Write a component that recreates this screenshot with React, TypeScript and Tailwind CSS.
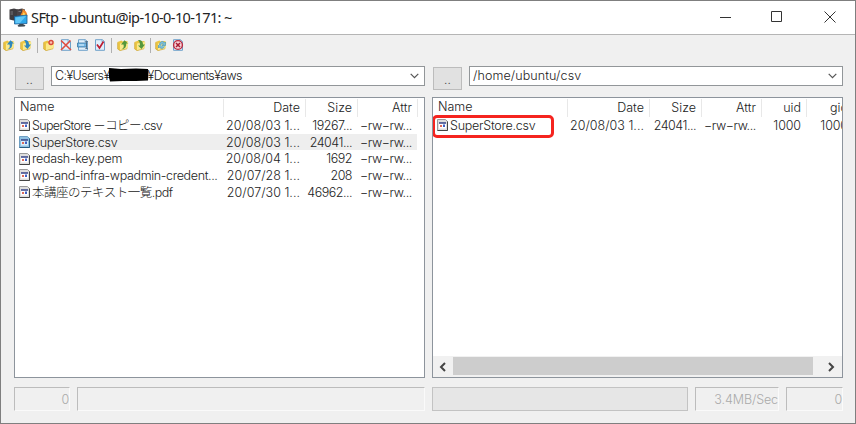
import {ReactNode} from "react"
import clsx from "clsx"

type FileRow = {
  name: string
  cells: string[]
  selected?: boolean
  tracking: string
}

type Column = {
  label: string
  width: string
  tracking: string
}

const localColumns: Column[] = [
  {label: "Date", width: "w-[82px]", tracking: "tracking-[0.020px]"},
  {label: "Size", width: "w-[52px]", tracking: "tracking-[-0.500px]"},
  {label: "Attr", width: "w-[60px]", tracking: "tracking-[-0.400px]"},
]

const remoteColumns: Column[] = [
  ...localColumns,
  {label: "uid", width: "w-[45px]", tracking: "tracking-[-0.100px]"},
  {label: "gid", width: "w-[47px]", tracking: "tracking-[-0.100px]"},
]

const localFiles: FileRow[] = [
  {
    name: "SuperStore －コピー.csv",
    cells: ["20/08/03 1...", "19267...", "−rw−rw..."],
    tracking: "tracking-[-0.650px]",
  },
  {
    name: "SuperStore.csv",
    cells: ["20/08/03 1...", "24041...", "−rw−rw..."],
    selected: true,
    tracking: "tracking-[-0.250px]",
  },
  {
    name: "redash-key.pem",
    cells: ["20/08/04 1...", "1692", "−rw−rw..."],
    tracking: "tracking-[-0.300px]",
  },
  {
    name: "wp-and-infra-wpadmin-credent...",
    cells: ["20/07/28 1...", "208", "−rw−rw..."],
    tracking: "tracking-[-0.350px]",
  },
  {
    name: "本講座のテキスト一覧.pdf",
    cells: ["20/07/30 1...", "46962...", "−rw−rw..."],
    tracking: "tracking-[-0.500px]",
  },
]

const remoteFiles: FileRow[] = [
  {
    name: "SuperStore.csv",
    cells: ["20/08/03 1...", "24041...", "−rw−rw...", "1000", "1000"],
    tracking: "tracking-[-0.250px]",
  },
]

const AppIcon = () => (
  <svg width="20" height="20" viewBox="0 0 20 20" className="shrink-0">
    <path d="M.5 1.500L5 .5l4 1V12l-4.500.5-4-1z" fill="#3e3c3f" />
    <path d="M8 1.500l5-1 3 1v9H8z" fill="#4a4346" />
    <path d="M1.500 4h2.500M1.500 6h2.500M9.500 3.500H12" stroke="#77777c" />
    <path d="M11.500 8.500c0-3 2.500-4 2-7.500 4 2 5.500 5 4.500 8z" fill="#f28a2c" />
    <path d="M13 8.500c0-2 1.500-2.500 1.500-4.500 1.500 1.500 2.500 3 1.500 4.500z" fill="#ffdc5c" />
    <path d="M5.500 8.500l12.500-1.500v8.500L5.500 16z" fill="#2fa8ea" stroke="#1c5d94" strokeWidth=".8" />
    <path d="M6.500 9.500L17 8l-6 7-4.500.3z" fill="#62c8f8" />
    <path d="M10.500 16h3.500l2.500 1.500-1 1-6 .3-1-1z" fill="#3d4a55" />
  </svg>
)

const Folder = ({children}: {children: ReactNode}) => (
  <svg width="12" height="12" viewBox="0 0 12 12" className="shrink-0">
    <path d="M.5 3L4.500 1.500l1 1 5-.5v7.500L3 11.800.5 10z" fill="#ecc644" />
    <path d="M3 4.500l7-1.500 1.500.8L10 9.800 3 11.500z" fill="#fbe98c" />
    <path d="M.7 3.500V10L3 11.600l7-1.800" fill="none" stroke="#c8a13a" strokeWidth=".6" />
    {children}
  </svg>
)

const Sheet = ({children}: {children: ReactNode}) => (
  <svg width="12" height="12" viewBox="0 0 12 12" className="shrink-0">
    <path d="M1.500.7h7l2 2v8.600h-9z" fill="#e1effa" stroke="#6fa2ca" />
    <path d="M8 .7v2.500h2.500" fill="none" stroke="#6fa2ca" strokeWidth=".7" />
    {children}
  </svg>
)

const Separator = () => <div className="h-[15px] w-px bg-[#b0b0b0]" />

const Toolbar = () => (
  <div className="flex h-[22px] items-center pb-[2px] pl-[2px]">
    <div className="flex w-[34px] gap-[5px]">
      <Folder>
        <path d="M4.500 10.500c2.500-1.500 2.500-3 2-5H4L7.500 1.300 11 4.500H9.300c.2 3.500-1.500 5.500-4.800 6z" fill="#2e87bd" />
      </Folder>
      <Folder>
        <path d="M4 1c4 0 5 2 5 4.500h2L7.500 10 4 6.500h2C6 4 5.500 2.500 4 1z" fill="#2e87bd" />
      </Folder>
    </div>
    <Separator />
    <div className="flex w-[73px] gap-[5px] pl-[5px]">
      <Folder>
        <circle cx="8" cy="3.500" r="2" fill="#fbc1b3" stroke="#d6473d" strokeWidth="1.400" />
      </Folder>
      <Sheet>
        <path d="M1 1.500l10 9.500M10.500 1.500L1 11" stroke="#df4c40" strokeWidth="1.600" />
      </Sheet>
      <Sheet>
        <path d="M.5 4h9v4h-9z" fill="#73b7e5" stroke="#3a77a3" strokeWidth=".8" />
        <path d="M2 6h5" stroke="#e8f6ff" />
        <path d="M9.500 2.500v7M8.300 2.500h2.500M8.300 9.500h2.500" stroke="#47657e" strokeWidth=".8" />
      </Sheet>
      <Sheet>
        <path d="M3 5.500l2.500 3.500 4-6.500" fill="none" stroke="#bd1d32" strokeWidth="1.700" />
      </Sheet>
    </div>
    <Separator />
    <div className="flex w-[38px] gap-[5px] pl-[5px]">
      <Folder>
        <path d="M4.500 10.500c2.500-1.500 2.500-3 2-5H4L7.500 1.300 11 4.500H9.300c.2 3.500-1.500 5.500-4.800 6z" fill="#55973b" />
      </Folder>
      <Folder>
        <path d="M4 1c4 0 5 2 5 4.500h2L7.500 10 4 6.500h2C6 4 5.500 2.500 4 1z" fill="#55973b" />
      </Folder>
    </div>
    <Separator />
    <div className="flex gap-[5px] pl-[4px]">
      <Folder>
        <path d="M4.500 6c0-4 4-4.500 5-2l1-1v3.500H7L8.300 5C7 4 6 5 5.500 6.500M9.500 7.500c-1 2.500-4 2.500-5 .5l-1 1V6" fill="#79bddb" stroke="#4b96b9" strokeWidth=".7" />
      </Folder>
      <Sheet>
        <circle cx="6" cy="6" r="4.400" fill="#f6d5db" stroke="#bd2a40" strokeWidth="1.400" />
        <path d="M4 4l4 4M8 4L4 8" stroke="#a91c33" strokeWidth="1.500" />
      </Sheet>
    </div>
  </div>
)

const FileIcon = ({selected}: {selected?: boolean}) => (
  <svg width="11" height="12" viewBox="0 0 11 12" className="shrink-0">
    <path d="M.5.5h8l2 2v9H.5z" fill={selected ? "#8fc0e2" : "#dedede"} stroke={selected ? "#6f9fc2" : "#9a9a9a"} />
    <path d="M10.500 2.500v9H.5" fill="none" stroke={selected ? "#265c83" : "#444"} />
    <path d="M2 4h7v5.500H2z" fill={selected ? "#d9effc" : "#fff"} />
    <path d="M2 4h7" stroke="#27357f" strokeWidth="1.400" />
    <path d="M3 6h2v2H3z" fill="#dd6a5c" />
    <path d="M6 5.500h2v2.500H6z" fill="#3f62c4" />
  </svg>
)

const PathBar = ({children}: {children: ReactNode}) => (
  <div className="flex h-[31px] items-start justify-between">
    <button className="mt-px ml-px h-[23px] w-[29px] border border-[#bcbcbc] bg-[#e1e1e1] pt-[3px] text-[12px] leading-[16px] text-[#555]">
      ..
    </button>
    <div className="flex h-5 w-[374px] items-center justify-between border border-[#929699] bg-white pr-[5px] pl-[3px]">
      <div className="flex items-center whitespace-pre">{children}</div>
      <svg width="9" height="6" viewBox="0 0 9 6">
        <path d="M.7.8l3.800 3.800L8.300.8" fill="none" stroke="#555" strokeWidth="1.200" />
      </svg>
    </div>
  </div>
)

interface PanelProps {
  columns: Column[]
  files: FileRow[]
  nameWidth: string
  highlightFirst?: boolean
  children?: ReactNode
}

const FilePanel = ({columns, files, nameWidth, highlightFirst, children}: PanelProps) => (
  <div className="flex h-[281px] w-[411px] flex-col overflow-hidden border border-[#8d949c] bg-white">
    <div className="flex h-[19px] shrink-0 items-center">
      <div className={clsx("shrink-0 pl-[5px]", nameWidth)}>Name</div>
      {columns.map(column => (
        <div
          key={column.label}
          className={clsx("h-[18px] shrink-0 border-l border-[#e8e8e8] pr-[5px] text-right leading-[18px]", column.width)}
        >
          {column.label}
        </div>
      ))}
      <div className="h-[18px] w-px shrink-0 bg-[#e8e8e8]" />
    </div>
    {files.map((file, i) => (
      <div key={file.name} className="relative flex h-[16.700px] shrink-0 items-center">
        {highlightFirst && i === 0 && (
          <div className="absolute top-[-2px] left-[-1px] h-[23px] w-[122px] rounded-[5px] border-3 border-[#f5241f]" />
        )}
        <div className={clsx("flex h-full shrink-0 items-center pl-[4px]", nameWidth)}>
          <FileIcon selected={file.selected} />
          <div
            className={clsx(
              "h-full grow pl-[2px] leading-[18px] whitespace-nowrap",
              file.selected && "bg-[#eeeeee]",
              file.tracking
            )}
          >
            {file.name}
          </div>
        </div>
        {file.cells.map((cell, j) => (
          <div
            key={j}
            className={clsx(
              "h-full shrink-0 pr-[5px] text-right leading-[18px] whitespace-nowrap",
              columns[j].width,
              columns[j].tracking,
              file.selected && "bg-[#eeeeee]"
            )}
          >
            {cell}
          </div>
        ))}
      </div>
    ))}
    {children}
  </div>
)

const Scrollbar = () => (
  <div className="mt-auto flex h-[21px] shrink-0 items-center justify-between bg-[#f1f1f1] px-[6px]">
    <svg width="8" height="10" viewBox="0 0 8 10">
      <path d="M6 1L2 5l4 4" fill="none" stroke="#444" strokeWidth="2" />
    </svg>
    <div className="mb-px h-[18px] w-[360px] bg-[#cdcdcd]" />
    <svg width="8" height="10" viewBox="0 0 8 10" className="mr-px ml-[8px]">
      <path d="M2 1l4 4-4 4" fill="none" stroke="#444" strokeWidth="2" />
    </svg>
  </div>
)

const StatusBox = ({width, children}: {width: string; children?: ReactNode}) => (
  <div
    className={clsx(
      "h-6 border border-t-[#bcbcbc] border-r-[#fafafa] border-b-[#fafafa] border-l-[#bcbcbc] text-right leading-[24px] tracking-[-0.100px] whitespace-nowrap text-[#aaa]",
      width
    )}
  >
    {children}
  </div>
)

export default function App() {
  return (
    <div className="flex h-[424px] w-[856px] flex-col overflow-hidden border border-[#7f7f7f] bg-[#f0f0f0] font-['Inter','Noto_Sans_CJK_JP',sans-serif] text-[12.500px] font-light text-[#222]">
      <div className="flex h-[34px] shrink-0 items-center border-b border-[#b5b5b5] bg-white pl-[8px]">
        <AppIcon />
        <div className="ml-[2px] grow font-['Noto_Sans',sans-serif] text-[14.500px] font-normal tracking-[-0.570px] text-[#222]">
          SFtp - ubuntu@ip-10-0-10-171: ~
        </div>
        <svg width="118" height="14" viewBox="0 0 118 14" fill="none" stroke="#333" className="mr-[18px] mb-px">
          <path d="M1 7.500h11M52.500 1.500h10v10h-10zM105.500 1.500l11 11M116.500 1.500l-11 11" />
        </svg>
      </div>
      <Toolbar />
      <div className="mt-[9px] flex gap-[7px] pl-[13px]">
        <div className="w-[411px]">
          <PathBar>
            <span className="tracking-[-0.600px]">C:¥Users¥</span>
            <svg width="42" height="16" viewBox="0 0 42 16" className="-mx-[2px] -mt-[3px]">
              <path d="M1 1l12 1 15-.5 12 .5.500 3-.5 8.500-12 .5H15l-13 .5-1-4z" fill="#000" />
            </svg>
            <span className="tracking-[-0.650px]">¥Documents¥aws</span>
          </PathBar>
          <FilePanel columns={localColumns} files={localFiles} nameWidth="w-[208px]" />
          <div className="mt-[9px] flex gap-[7px]">
            <StatusBox width="w-[56px]">0</StatusBox>
            <StatusBox width="w-[348px]" />
          </div>
        </div>
        <div className="w-[411px]">
          <PathBar>
            <span className="tracking-[0.100px]">/home/ubuntu/csv</span>
          </PathBar>
          <FilePanel columns={remoteColumns} files={remoteFiles} nameWidth="w-[134px]" highlightFirst>
            <Scrollbar />
          </FilePanel>
          <div className="mt-[9px] flex gap-[7px]">
            <div className="h-6 w-[256px] border border-[#c3c3c3] bg-[#e6e6e6]" />
            <StatusBox width="w-[84px]">3.4MB/Sec</StatusBox>
            <StatusBox width="w-[57px]">0</StatusBox>
          </div>
        </div>
      </div>
    </div>
  )
}
